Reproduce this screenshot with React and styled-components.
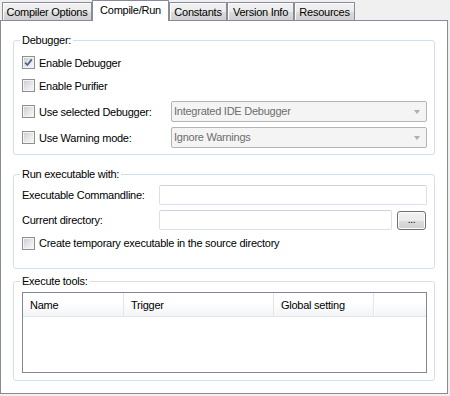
import React from "react";
import styled, { createGlobalStyle } from "styled-components";

const GlobalStyle = createGlobalStyle`
  html, body {
    margin: 0;
    padding: 0;
    background: #f0f0f0;
  }
  body {
    font-family: "Liberation Sans", Arial, sans-serif;
    font-size: 11px;
    letter-spacing: -0.25px;
    color: #000;
  }
  * {
    box-sizing: border-box;
  }
`;

const tabs = [
  { label: "Compiler Options", width: 90 },
  { label: "Compile/Run", width: 77, active: true },
  { label: "Constants", width: 58 },
  { label: "Version Info", width: 67 },
  { label: "Resources", width: 61 },
];

const columns = [
  { label: "Name", width: 101 },
  { label: "Trigger", width: 150 },
  { label: "Global setting", width: 100 },
];

const App = () => {
  return (
    <>
      <GlobalStyle />
      <Window>
        <TabStrip>
          {tabs.map((tab) => (
            <Tab key={tab.label} $w={tab.width} $active={tab.active}>
              {tab.label}
            </Tab>
          ))}
        </TabStrip>
        <Page>
          <Group $h={121}>
            <Legend>Debugger:</Legend>
            <Row>
              <CheckOption checked label="Enable Debugger" />
            </Row>
            <Row>
              <CheckOption label="Enable Purifier" />
            </Row>
            <Row $h={21} $mt={4} $grid="149px 1fr">
              <CheckOption label="Use selected Debugger:" />
              <Select>Integrated IDE Debugger</Select>
            </Row>
            <Row $h={21} $mt={5} $grid="149px 1fr">
              <CheckOption label="Use Warning mode:" />
              <Select>Ignore Warnings</Select>
            </Row>
          </Group>

          <Group $h={101} $mt={13}>
            <Legend>Run executable with:</Legend>
            <Row $h={20} $grid="137px 1fr">
              <span>Executable Commandline:</span>
              <TextBox />
            </Row>
            <Row $h={20} $mt={5} $grid="137px 1fr auto">
              <span>Current directory:</span>
              <TextBox />
              <Button>...</Button>
            </Row>
            <Row $h={16} $mt={5}>
              <CheckOption label="Create temporary executable in the source directory" />
            </Row>
          </Group>

          <Group $h={106} $mt={6}>
            <Legend>Execute tools:</Legend>
            <ListView>
              <ListHeader>
                {columns.map((col) => (
                  <HeaderCell key={col.label} $w={col.width}>
                    {col.label}
                  </HeaderCell>
                ))}
                <HeaderFiller />
              </ListHeader>
            </ListView>
          </Group>
        </Page>
      </Window>
    </>
  );
};

const CheckOption = ({ checked, label }) => (
  <CheckLabel>
    <CheckBox>
      {checked && (
        <svg width="9" height="9" viewBox="0 0 9 9">
          <path
            d="M1.2 4.6 L3.4 7 L7.8 1.4"
            fill="none"
            stroke="#4d5f8c"
            strokeWidth="1.7"
          />
        </svg>
      )}
    </CheckBox>
    <span>{label}</span>
  </CheckLabel>
);

export default App;

const Window = styled.div`
  width: 450px;
  height: 396px;
  display: flex;
  flex-direction: column;
  background: #f0f0f0;
`;

const TabStrip = styled.div`
  display: flex;
  align-items: flex-end;
  height: 20px;
  padding-left: 2px;
`;

const Tab = styled.div`
  width: ${(p) => p.$w}px;
  height: ${(p) => (p.$active ? 21 : 18)}px;
  margin-bottom: ${(p) => (p.$active ? -1 : 0)}px;
  position: relative;
  z-index: ${(p) => (p.$active ? 2 : 1)};
  display: flex;
  align-items: center;
  justify-content: center;
  padding-bottom: ${(p) => (p.$active ? 2 : 0)}px;
  border: 1px solid #898c95;
  border-bottom: none;
  border-radius: 1px 1px 0 0;
  background: ${(p) =>
    p.$active
      ? "#fff"
      : "linear-gradient(#f2f2f2 0%, #ebebeb 50%, #dddddd 51%, #cfcfcf 100%)"};
  box-shadow: ${(p) => (p.$active ? "none" : "inset 1px 1px 0 #fcfcfc")};
  white-space: nowrap;
`;

const Page = styled.div`
  width: 448px;
  height: 374px;
  background: #fff;
  border: 1px solid #898c95;
  padding: 13px 12px 0 12px;
  display: flex;
  flex-direction: column;
`;

const Group = styled.fieldset`
  margin: ${(p) => p.$mt || 0}px 0 0;
  padding: 4px 7px 0 8px;
  height: ${(p) => p.$h}px;
  min-width: 0;
  border: 1px solid #d5dfe5;
  border-radius: 3px;
  display: flex;
  flex-direction: column;
`;

const Legend = styled.legend`
  margin-left: -2px;
  padding: 0 2px;
  line-height: 13px;
  font-size: 11px;
`;

const Row = styled.div`
  display: ${(p) => (p.$grid ? "grid" : "flex")};
  grid-template-columns: ${(p) => p.$grid || "none"};
  align-items: center;
  height: ${(p) => p.$h || 23}px;
  margin-top: ${(p) => p.$mt || 0}px;
  flex-shrink: 0;
`;

const CheckLabel = styled.label`
  display: flex;
  align-items: center;
  gap: 4px;
  white-space: nowrap;
`;

const CheckBox = styled.span`
  width: 13px;
  height: 13px;
  flex-shrink: 0;
  border: 1px solid #8e8f8f;
  background: #fff;
  display: flex;
  align-items: center;
  justify-content: center;
  box-shadow: inset 0 0 0 1px #f4f4f4;
  background-image: linear-gradient(135deg, #cbcfd5 0%, #e3e5e8 50%, #f6f6f6 100%);
  background-size: 9px 9px;
  background-position: 1px 1px;
  background-repeat: no-repeat;
`;

const Select = styled.div`
  height: 21px;
  position: relative;
  border: 1px solid #b4b4b4;
  border-radius: 2px;
  background: #f4f4f4;
  color: #6d6d6d;
  padding-left: 2px;
  line-height: 19px;

  &::after {
    content: "";
    position: absolute;
    right: 6px;
    top: 8px;
    border-left: 3.5px solid transparent;
    border-right: 3.5px solid transparent;
    border-top: 4px solid #aeaeae;
  }
`;

const TextBox = styled.div`
  height: 20px;
  border: 1px solid #dcdfe5;
  border-top-color: #d0d3d9;
  border-radius: 2px;
  background: #fff;
`;

const Button = styled.div`
  width: 29px;
  height: 19px;
  margin: 0 1px 0 5px;
  border: 1px solid #707070;
  border-radius: 3px;
  background: linear-gradient(#f2f2f2 0%, #ebebeb 50%, #dddddd 51%, #cfcfcf 100%);
  box-shadow: inset 0 0 0 1px #fcfcfc;
  display: flex;
  align-items: center;
  justify-content: center;
  font-size: 10px;
  padding-bottom: 2px;
`;

const ListView = styled.div`
  height: 81px;
  border: 1px solid #828790;
  background: #fff;
`;

const ListHeader = styled.div`
  display: flex;
  height: 24px;
  border-bottom: 1px solid #e3e5e8;
  background: linear-gradient(#ffffff 0%, #ffffff 40%, #f3f4f6 100%);
`;

const HeaderCell = styled.div`
  width: ${(p) => p.$w}px;
  flex-shrink: 0;
  padding-left: 7px;
  display: flex;
  align-items: center;
  border-right: 1px solid #e3e5e8;
`;

const HeaderFiller = styled.div`
  flex: 1;
  border-left: 1px solid #fff;
`;
